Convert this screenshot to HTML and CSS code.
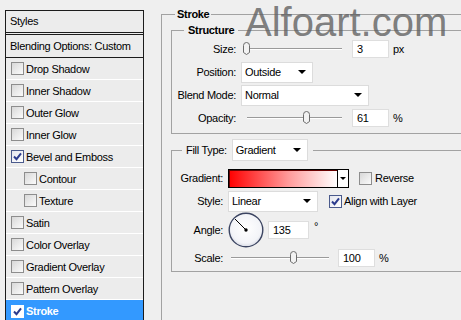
FILE: index.html
```html
<!DOCTYPE html>
<html lang="en">
<head>
    <meta charset="UTF-8">
    <title>Layer Style - Stroke</title>
    <link rel="stylesheet" href="styles.css">
</head>
<body>
<div class="dialog">
    <div class="styles-panel">
        <div class="panel-head">Styles</div>
        <div class="panel-blend">Blending Options: Custom</div>
        <div class="style-item"><span class="check"></span>Drop Shadow</div>
        <div class="style-item"><span class="check"></span>Inner Shadow</div>
        <div class="style-item"><span class="check"></span>Outer Glow</div>
        <div class="style-item"><span class="check"></span>Inner Glow</div>
        <div class="style-item"><span class="check on"><svg viewBox="0 0 11 11"><path d="M2 5.5L4.5 8.2L9 2.3"/></svg></span>Bevel and Emboss</div>
        <div class="style-item sub"><span class="check"></span>Contour</div>
        <div class="style-item sub"><span class="check"></span>Texture</div>
        <div class="style-item"><span class="check"></span>Satin</div>
        <div class="style-item"><span class="check"></span>Color Overlay</div>
        <div class="style-item"><span class="check"></span>Gradient Overlay</div>
        <div class="style-item"><span class="check"></span>Pattern Overlay</div>
        <div class="style-item active"><span class="check on"><svg viewBox="0 0 11 11"><path d="M2 5.5L4.5 8.2L9 2.3"/></svg></span>Stroke</div>
    </div>

    <div class="settings">
        <fieldset class="group outer">
            <legend class="title">Stroke</legend>

            <fieldset class="group structure">
                <legend class="title sub-title">Structure</legend>
                <div class="rows">
                    <div class="row">
                        <span class="lbl">Size:</span>
                        <div class="slider">
                            <svg class="thumb" style="left:1px" viewBox="0 0 9 13"><path d="M1.5 3.5Q1.5 .5 4.5 .5Q7.5 .5 7.5 3.5V10.5L4.5 12.5L1.5 10.5Z"/></svg>
                        </div>
                        <span class="num">3</span>
                        <span class="unit">px</span>
                    </div>
                    <div class="row">
                        <span class="lbl">Position:</span>
                        <div class="select sel-position">Outside<i class="arrow"></i></div>
                    </div>
                    <div class="row">
                        <span class="lbl">Blend Mode:</span>
                        <div class="select sel-blend">Normal<i class="arrow"></i></div>
                    </div>
                    <div class="row">
                        <span class="lbl">Opacity:</span>
                        <div class="slider">
                            <svg class="thumb" style="left:61px" viewBox="0 0 9 13"><path d="M1.5 3.5Q1.5 .5 4.5 .5Q7.5 .5 7.5 3.5V10.5L4.5 12.5L1.5 10.5Z"/></svg>
                        </div>
                        <span class="num">61</span>
                        <span class="unit">%</span>
                    </div>
                </div>
            </fieldset>

            <fieldset class="group fill">
                <legend class="fill-legend">
                    <span class="fill-lbl">Fill Type:</span>
                    <span class="select sel-fill">Gradient<i class="arrow"></i></span>
                </legend>
                <div class="rows">
                    <div class="row row-gradient">
                        <span class="lbl">Gradient:</span>
                        <div class="gradient"></div>
                        <div class="grad-btn"><i class="arrow small"></i></div>
                        <span class="check box-reverse"></span>
                        <span class="check-text">Reverse</span>
                    </div>
                    <div class="row row-style">
                        <span class="lbl">Style:</span>
                        <div class="select sel-style">Linear<i class="arrow"></i></div>
                        <span class="check on box-align"><svg viewBox="0 0 11 11"><path d="M2 5.5L4.5 8.2L9 2.3"/></svg></span>
                        <span class="check-text">Align with Layer</span>
                    </div>
                    <div class="row row-angle">
                        <span class="lbl">Angle:</span>
                        <svg class="dial" viewBox="0 0 36 36">
                            <defs>
                                <radialGradient id="dial-bg" cx="50%" cy="45%" r="55%">
                                    <stop offset="0" stop-color="#ffffff"/>
                                    <stop offset="0.8" stop-color="#f3f4f8"/>
                                    <stop offset="1" stop-color="#d9dce6"/>
                                </radialGradient>
                            </defs>
                            <circle cx="18" cy="18" r="16.8" fill="url(#dial-bg)" stroke="#3c4562" stroke-width="1.4"/>
                            <line x1="18" y1="18" x2="7" y2="7" stroke="#000" stroke-width="1"/>
                            <circle cx="18" cy="18" r="1.7" fill="#000"/>
                        </svg>
                        <span class="num num-angle">135</span>
                        <span class="deg">&deg;</span>
                    </div>
                    <div class="row row-scale">
                        <span class="lbl">Scale:</span>
                        <div class="slider slider-scale">
                            <svg class="thumb" style="left:61px" viewBox="0 0 9 13"><path d="M1.5 3.5Q1.5 .5 4.5 .5Q7.5 .5 7.5 3.5V10.5L4.5 12.5L1.5 10.5Z"/></svg>
                        </div>
                        <span class="num">100</span>
                        <span class="unit">%</span>
                    </div>
                </div>
            </fieldset>
        </fieldset>
    </div>

    <div class="watermark">Alfoart.com</div>
</div>
</body>
</html>
```

FILE: styles.css
```css
*{
    margin: 0;
    padding: 0;
    box-sizing: border-box;
}
body{
    background: #efefef;
    font-family: "Liberation Sans", Arial, sans-serif;
    font-size: 11px;
    letter-spacing: -0.3px;
    color: #000000;
    overflow: hidden;
}
.dialog{
    position: relative;
    display: flex;
    align-items: flex-start;
    width: 461px;
    height: 320px;
    overflow: hidden;
}

/* left list of styles */
.styles-panel{
    flex-shrink: 0;
    width: 139px;
    margin: 10px 0 0 5px;
    border: 1px solid #1c1c1c;
    border-bottom: none;
    background: #ececec;
}
.panel-head{
    height: 24px;
    line-height: 21px;
    padding-left: 4px;
    border-bottom: 3px double #1c1c1c;
}
.panel-blend{
    height: 23px;
    line-height: 22px;
    padding-left: 4px;
    border-bottom: 1px solid #1c1c1c;
}
.style-item{
    display: flex;
    align-items: center;
    gap: 2px;
    height: 22px;
    padding-left: 5px;
    border-bottom: 1px solid #ffffff;
}
.style-item.sub{
    padding-left: 18px;
}
.style-item.active{
    background: #3399ff;
    color: #ffffff;
    font-weight: bold;
    border-bottom: none;
}

/* checkbox */
.check{
    flex-shrink: 0;
    display: inline-block;
    width: 13px;
    height: 13px;
    border: 1px solid #8d8d8d;
    background: linear-gradient(135deg, #d8d8d8, #fbfbfb);
}
.check.on{
    border-color: #4a5a8c;
    background: linear-gradient(135deg, #e4e6ee, #ffffff);
}
.active .check.on{
    border-color: #ffffff;
    background: #ffffff;
}
.check svg{
    display: block;
    width: 11px;
    height: 11px;
}
.check svg path{
    fill: none;
    stroke: #2c3c8e;
    stroke-width: 2;
}

/* right side */
.settings{
    margin-left: 17px;
}
.group{
    border: none;
    border-top: 1px solid #a2a2a2;
    border-left: 1px solid #a2a2a2;
    padding: 0;
}
.outer{
    width: 320px;
    height: 330px;
    margin-top: 7px;
}
.title{
    margin-left: 13px;
    padding: 0 2px;
    font-weight: bold;
    line-height: 14px;
}
.sub-title{
    margin-left: 12px;
    padding: 0 4px;
}
.structure{
    width: 300px;
    margin: 2px 0 0 9px;
    padding: 1px 0 4px;
    border-bottom: 1px solid #a2a2a2;
}
.fill{
    width: 300px;
    margin: 5px 0 0 9px;
    padding: 5px 0 3px;
    border-bottom: 1px solid #a2a2a2;
}
.fill-legend{
    display: flex;
    align-items: center;
    gap: 5px;
    margin-left: 10px;
    padding: 0 5px 0 4px;
}
.rows{
    display: flex;
    flex-direction: column;
    gap: 1px;
}
.row{
    display: flex;
    align-items: center;
    height: 22px;
}
.lbl{
    width: 64px;
    margin-right: 5px;
    text-align: right;
}
.fill .rows{
    gap: 0;
}
.fill .lbl{
    width: 51px;
}
.row-gradient{
    height: 24px;
}
.row-angle{
    height: 36px;
}
.row-scale{
    height: 20px;
}

/* slider */
.slider{
    position: relative;
    width: 106px;
    height: 22px;
    margin-right: 5px;
}
.slider::before{
    content: "";
    position: absolute;
    left: 6px;
    right: 5px;
    top: 10px;
    height: 1px;
    background: #9a9a9a;
    box-shadow: 0 1px 0 #ffffff;
}
.slider-scale{
    width: 105px;
    height: 20px;
}
.slider-scale::before{
    left: 3px;
    right: 4px;
    top: 9px;
}
.thumb{
    position: absolute;
    top: 4px;
    width: 9px;
    height: 13px;
}
.slider-scale .thumb{
    top: 3px;
}
.thumb path{
    fill: #f2f2f2;
    stroke: #6c6c6c;
    stroke-width: 1;
}

/* text fields */
.num{
    width: 37px;
    height: 18px;
    margin-right: 4px;
    padding-left: 4px;
    line-height: 16px;
    background: #ffffff;
    border: 1px solid #dedede;
}
.num-angle{
    width: 41px;
    height: 18px;
    margin-right: 5px;
}
.deg{
    align-self: flex-start;
    margin-top: 8px;
}

/* drop-downs */
.select{
    display: flex;
    align-items: center;
    justify-content: space-between;
    height: 21px;
    padding: 0 6px 0 3px;
    background: #ffffff;
    border: 1px solid #dcdcdc;
}
.sel-position{
    width: 72px;
}
.sel-blend{
    width: 128px;
}
.sel-fill{
    width: 76px;
    height: 22px;
    font-weight: normal;
}
.sel-style{
    width: 90px;
    margin-right: 11px;
}
.arrow{
    width: 0;
    height: 0;
    border-left: 4px solid transparent;
    border-right: 4px solid transparent;
    border-top: 4px solid #000000;
}
.arrow.small{
    border-left-width: 3px;
    border-right-width: 3px;
    border-top-width: 3px;
}

/* gradient picker */
.gradient{
    width: 110px;
    height: 19px;
    border: 1px solid #000000;
    box-shadow: inset 1px 1px 0 #6a0000;
    background: linear-gradient(to right, #ff0000, #ff9a9a 55%, #ffffff);
}
.grad-btn{
    display: flex;
    align-items: center;
    justify-content: center;
    width: 11px;
    height: 19px;
    margin-right: 10px;
    background: #ffffff;
    border: 1px solid #000000;
    border-left: none;
}
.check-text{
    margin-left: 3px;
}
.box-align + .check-text{
    margin-left: 2px;
}

.dial{
    width: 36px;
    height: 36px;
    margin-right: 4px;
}

.watermark{
    position: absolute;
    left: 245px;
    top: 0;
    font-family: "Liberation Sans", Arial, sans-serif;
    font-size: 40px;
    line-height: normal;
    letter-spacing: 0;
    color: rgba(96, 96, 96, 0.8);
}
```
